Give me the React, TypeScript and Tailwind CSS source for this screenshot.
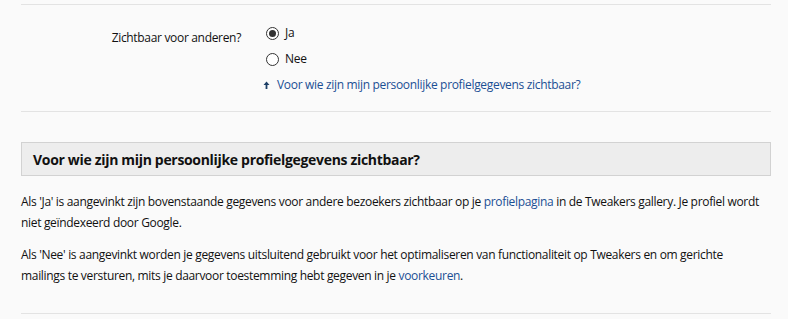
import { useState } from "react";

// Profile visibility setting, with the explanation block underneath.
function Radio({ checked, label, onSelect }: { checked: boolean; label: string; onSelect: () => void }) {
  return (
    <label className="flex h-[26px] cursor-pointer items-center" onClick={onSelect}>
      <span className="ml-[25px] flex h-[13px] w-[13px] items-center justify-center rounded-full border border-[#333] bg-white">
        {checked ? <span className="h-[7px] w-[7px] rounded-full bg-[#333]" /> : null}
      </span>
      <span className="ml-[6px] text-[12px] text-[#111]">{label}</span>
    </label>
  );
}

function ArrowUp() {
  return (
    <svg width="7" height="8" viewBox="0 0 7 8" className="ml-[22px] mr-[7px]">
      <path d="M3.5 0.5 L6.5 4 H4.4 V8 H2.6 V4 H0.5 Z" fill="#1d3f66" />
    </svg>
  );
}

export default function App() {
  const [visible, setVisible] = useState(true);

  return (
    <div
      className="h-[319px] w-full bg-[#fafafa] pl-[21px] pr-[17px] pt-[4px] text-[12px] tracking-[-0.32px] text-[#111]"
      style={{ fontFamily: '"Open Sans", "Noto Sans", sans-serif' }}
    >
      <div className="border-t border-[#e3e3e3]" />

      <div className="flex pt-[15px] pb-[13px]">
        <div className="w-[220px] pt-[5px] text-right leading-[26px]">Zichtbaar voor anderen?</div>
        <div className="flex flex-col">
          <Radio checked={visible} label="Ja" onSelect={() => setVisible(true)} />
          <Radio checked={!visible} label="Nee" onSelect={() => setVisible(false)} />
          <a href="#uitleg" className="flex h-[26px] items-center text-[#1a4f94]">
            <ArrowUp />
            Voor wie zijn mijn persoonlijke profielgegevens zichtbaar?
          </a>
        </div>
      </div>

      <div className="border-t border-[#e3e3e3]" />

      <h3
        id="uitleg"
        className="mt-[30px] flex h-[34px] items-center border border-[#d2d2d2] bg-[#ededed] px-[11px] text-[14px] font-bold text-[#111]"
      >
        Voor wie zijn mijn persoonlijke profielgegevens zichtbaar?
      </h3>

      <div className="pr-[10px]">
        <p className="mt-[15px] leading-[21px]">
          Als 'Ja' is aangevinkt zijn bovenstaande gegevens voor andere bezoekers zichtbaar op je{" "}
          <a href="#" className="text-[#1a4f94]">profielpagina</a> in de Tweakers gallery. Je profiel wordt niet geïndexeerd door Google.
        </p>
        <p className="mt-[11px] leading-[21px]">
          Als 'Nee' is aangevinkt worden je gegevens uitsluitend gebruikt voor het optimaliseren van functionaliteit op Tweakers en om gerichte mailings te versturen, mits je daarvoor toestemming hebt gegeven in je{" "}
          <a href="#" className="text-[#1a4f94]">voorkeuren</a>.
        </p>
      </div>

      <div className="mt-[27px] border-t border-[#e3e3e3]" />
    </div>
  );
}
